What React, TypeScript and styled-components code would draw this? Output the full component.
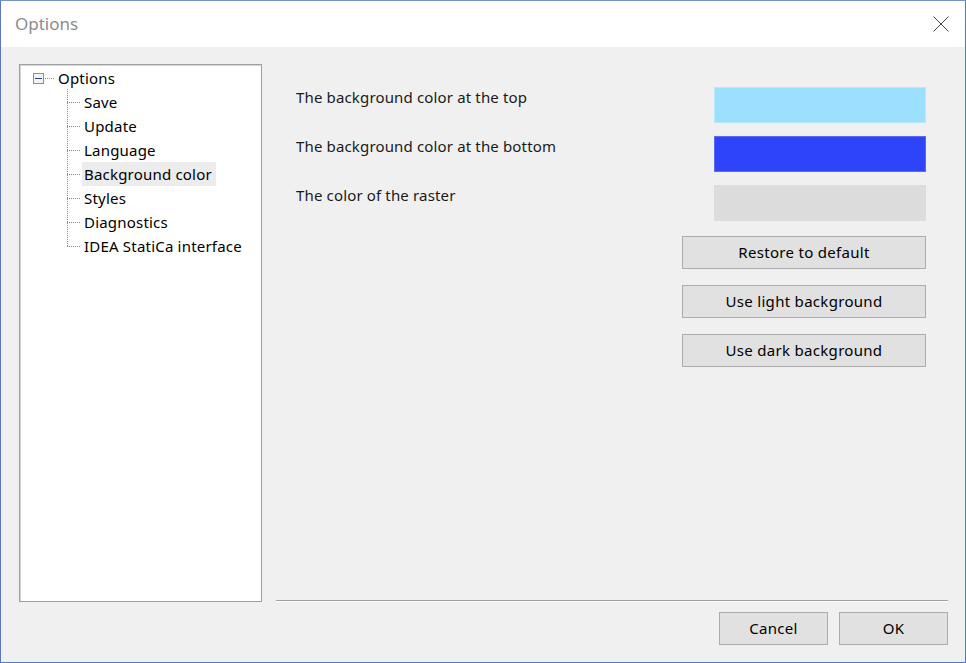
import React from "react";
import styled, { createGlobalStyle } from "styled-components";

const Global = createGlobalStyle`
  html, body { margin: 0; padding: 0; background: #ffffff; }
  body { font-family: "Noto Sans", "Liberation Sans", sans-serif; }
  * { box-sizing: border-box; }
`;

const Window = styled.div`
  width: 966px;
  height: 663px;
  display: flex;
  flex-direction: column;
  border: 1px solid #5a78c8;
  border-top-color: #7492c2;
  background: #f0f0f0;
`;

const TitleBar = styled.div`
  height: 46px;
  flex: none;
  background: #ffffff;
  display: flex;
  align-items: center;
  justify-content: space-between;
  padding: 0 16px 0 14px;
`;

const Title = styled.div`
  font-size: 17px;
  color: #8c8c8c;
  margin-top: -1px;
`;

const CloseButton = styled.div`
  width: 16px;
  height: 16px;
  display: flex;
  margin-top: -1px;
`;

const Body = styled.div`
  flex: 1;
  display: flex;
  flex-direction: column;
  padding: 17px 17px 0 18px;
`;

const MainRow = styled.div`
  display: flex;
  gap: 14px;
`;

const TreePanel = styled.div`
  width: 243px;
  height: 538px;
  flex: none;
  background: #ffffff;
  border: 1px solid #a0a0a0;
  box-shadow: inset 1px 1px 0 #d6d6d6;
  padding: 1px 0 0 13px;
  font-size: 15px;
  letter-spacing: 0.2px;
  color: #000;
`;

const TreeRow = styled.div`
  height: 24px;
  display: flex;
  align-items: center;
`;

const Expander = styled.div`
  width: 11px;
  height: 11px;
  border: 1px solid #8f8f8f;
  background: #f4f4f4;
  display: flex;
  align-items: center;
  justify-content: center;
  margin-right: 1px;
  &::after {
    content: "";
    width: 7px;
    height: 1px;
    background: #2b3c8c;
  }
`;

const HDots = styled.div<{ $w: number }>`
  width: ${(p) => p.$w}px;
  height: 1px;
  flex: none;
  background: repeating-linear-gradient(90deg, #8a8a8a 0 1px, transparent 1px 2px);
`;

const ChildList = styled.div`
  position: relative;
  margin-left: 34px;
  &::before {
    content: "";
    position: absolute;
    left: 0;
    top: -1px;
    bottom: 12px;
    width: 1px;
    background: repeating-linear-gradient(180deg, #8a8a8a 0 1px, transparent 1px 2px);
  }
`;

const ItemLabel = styled.span<{ $selected?: boolean }>`
  margin-left: 2px;
  padding: 0 4px 0 2px;
  height: 24px;
  line-height: 24px;
  background: ${(p) => (p.$selected ? "#ececec" : "transparent")};
`;

const RightCol = styled.div`
  width: 672px;
  height: 538px;
  display: flex;
  flex-direction: column;
`;

const Content = styled.div`
  flex: 1;
  display: flex;
  flex-direction: column;
  padding: 23px 22px 0 20px;
`;

const SettingRow = styled.div`
  display: flex;
  justify-content: space-between;
  align-items: flex-start;
  margin-bottom: 13px;
`;

const SettingLabel = styled.div`
  font-size: 15px;
  letter-spacing: 0.15px;
  color: #1a1a1a;
  line-height: 22px;
  margin-top: -1px;
`;

const Swatch = styled.div<{ $color: string; $border: string }>`
  width: 212px;
  height: 36px;
  background: ${(p) => p.$color};
  border: 1px solid ${(p) => p.$border};
`;

const ButtonStack = styled.div`
  display: flex;
  flex-direction: column;
  align-items: flex-end;
  gap: 16px;
  margin-top: 2px;
`;

const Button = styled.button<{ $w: number }>`
  width: ${(p) => p.$w}px;
  height: 33px;
  background: #e1e1e1;
  border: 1px solid #adadad;
  font-family: "Noto Sans", "Liberation Sans", sans-serif;
  font-size: 15px;
  letter-spacing: 0.3px;
  color: #000;
  padding: 0 0 2px;
  border-radius: 0;
`;

const Separator = styled.div`
  height: 2px;
  flex: none;
  border-top: 1px solid #a0a0a0;
  border-bottom: 1px solid #ffffff;
`;

const Footer = styled.div`
  display: flex;
  justify-content: flex-end;
  gap: 11px;
  margin-top: 10px;
`;

const items = [
  "Save",
  "Update",
  "Language",
  "Background color",
  "Styles",
  "Diagnostics",
  "IDEA StatiCa interface",
];

export default function App() {
  return (
    <>
      <Global />
      <Window>
        <TitleBar>
          <Title>Options</Title>
          <CloseButton>
            <svg width="16" height="16" viewBox="0 0 16 16">
              <path d="M0.5 0.5 L15.5 15.5 M15.5 0.5 L0.5 15.5" stroke="#444" strokeWidth="1" fill="none" />
            </svg>
          </CloseButton>
        </TitleBar>
        <Body>
          <MainRow>
            <TreePanel>
              <TreeRow>
                <Expander />
                <HDots $w={9} />
                <ItemLabel>Options</ItemLabel>
              </TreeRow>
              <ChildList>
                {items.map((it) => (
                  <TreeRow key={it}>
                    <HDots $w={13} />
                    <ItemLabel $selected={it === "Background color"}>{it}</ItemLabel>
                  </TreeRow>
                ))}
              </ChildList>
            </TreePanel>
            <RightCol>
              <Content>
                <SettingRow>
                  <SettingLabel>The background color at the top</SettingLabel>
                  <Swatch $color="#9ddfff" $border="#b8e8fc" />
                </SettingRow>
                <SettingRow>
                  <SettingLabel>The background color at the bottom</SettingLabel>
                  <Swatch $color="#2e44f8" $border="#5b6cf2" />
                </SettingRow>
                <SettingRow>
                  <SettingLabel>The color of the raster</SettingLabel>
                  <Swatch $color="#dcdcdc" $border="#dcdcdc" />
                </SettingRow>
                <ButtonStack>
                  <Button $w={244}>Restore to default</Button>
                  <Button $w={244}>Use light background</Button>
                  <Button $w={244}>Use dark background</Button>
                </ButtonStack>
              </Content>
              <Separator />
            </RightCol>
          </MainRow>
          <Footer>
            <Button $w={109}>Cancel</Button>
            <Button $w={109}>OK</Button>
          </Footer>
        </Body>
      </Window>
    </>
  );
}
